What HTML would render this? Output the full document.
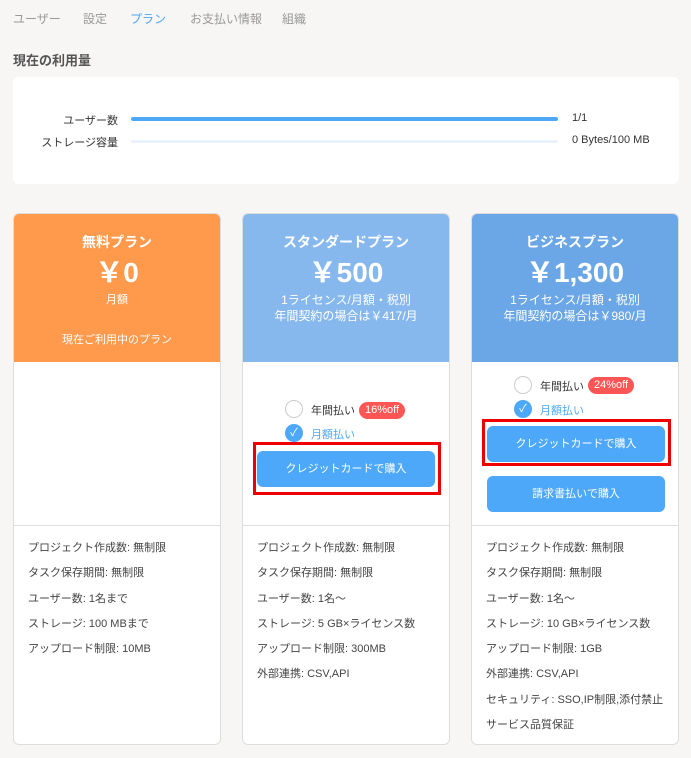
<!DOCTYPE html>
<html><head><meta charset="utf-8"><style>
*{margin:0;padding:0;box-sizing:border-box}
body{width:691px;height:758px;background:#f7f6f5;font-family:"Liberation Sans","Noto Sans CJK JP",sans-serif;position:relative;overflow:hidden;color:#333}
.a{position:absolute}
.tab{top:10px;font-size:12px;color:#999}
.card{position:absolute;top:213px;height:532px;background:#fff;border:1px solid #ddd;border-radius:6px;overflow:hidden}
.hd{height:148px;color:#fff;text-align:center}
.hd .t{padding-top:18px;font-size:14px;font-weight:bold;height:40px}
.hd .p{font-size:28px;font-weight:bold;height:38px;line-height:38px}
.hd .s{font-size:12px;line-height:16px}
.line{position:absolute;left:0;right:0;top:311px;border-top:1px solid #ddd}
.f{position:absolute;left:14px;top:322px;font-size:11px;line-height:25.3px;color:#444}
.btn{position:absolute;background:#4da8fa;color:#fff;border-radius:6px;font-size:11px;text-align:center;height:36px;line-height:36px}
.red{position:absolute;border:3px solid #e00}
.rad{position:absolute;width:18px;height:18px;border-radius:50%;border:1px solid #ccc;background:#fff}
.chk{position:absolute;width:18px;height:18px;border-radius:50%;background:#4da8fa;color:#fff;font-size:11px;text-align:center;line-height:18px}
.lb{position:absolute;font-size:11px}
.off{position:absolute;background:#f55;color:#fff;font-size:11px;border-radius:9px;height:17px;line-height:17px;padding:0 6px}
</style></head><body>
<div class="a tab" style="left:13px">ユーザー</div>
<div class="a tab" style="left:83px">設定</div>
<div class="a tab" style="left:130px;color:#4da8fa">プラン</div>
<div class="a tab" style="left:190px">お支払い情報</div>
<div class="a tab" style="left:282px">組織</div>
<div class="a" style="left:13px;top:50px;font-size:13px;font-weight:bold;color:#555">現在の利用量</div>
<div class="a" style="left:13px;top:77px;width:666px;height:107px;background:#fff;border-radius:6px"></div>
<div class="a" style="left:30px;top:112px;width:88px;text-align:right;font-size:11px">ユーザー数</div>
<div class="a" style="left:131px;top:117px;width:427px;height:4px;border-radius:2px;background:#4da8fa"></div>
<div class="a" style="left:572px;top:112px;font-size:11px">1/1</div>
<div class="a" style="left:30px;top:134px;width:88px;text-align:right;font-size:11px">ストレージ容量</div>
<div class="a" style="left:131px;top:140px;width:427px;height:3px;border-radius:2px;background:#eaf3fd"></div>
<div class="a" style="left:572px;top:134px;font-size:11px">0 Bytes/100 MB</div>

<div class="card" style="left:13px;width:208px">
<div class="hd" style="background:#ff9a4c"><div class="t">無料プラン</div><div class="p">￥0</div><div class="s" style="font-size:11px">月額</div><div class="s" style="margin-top:24px;font-size:11px">現在ご利用中のプラン</div></div>
<div class="line"></div>
<div class="f">プロジェクト作成数: 無制限<br>タスク保存期間: 無制限<br>ユーザー数: 1名まで<br>ストレージ: 100 MBまで<br>アップロード制限: 10MB</div>
</div>

<div class="card" style="left:242px;width:208px">
<div class="hd" style="background:#86b8ee"><div class="t">スタンダードプラン</div><div class="p">￥500</div><div class="s">1ライセンス/月額・税別</div><div class="s">年間契約の場合は￥417/月</div></div>
<div class="rad" style="left:42px;top:186px"></div><div class="lb" style="left:68px;top:188px">年間払い</div><div class="off" style="left:116px;top:188px">16%off</div>
<div class="chk" style="left:42px;top:210px">✓</div><div class="lb" style="left:68px;top:212px;color:#4da8fa">月額払い</div>
<div class="btn" style="left:14px;top:237px;width:178px">クレジットカードで購入</div>
<div class="line"></div>
<div class="f">プロジェクト作成数: 無制限<br>タスク保存期間: 無制限<br>ユーザー数: 1名～<br>ストレージ: 5 GB×ライセンス数<br>アップロード制限: 300MB<br>外部連携: CSV,API</div>
</div>

<div class="card" style="left:471px;width:208px">
<div class="hd" style="background:#6ba7e6"><div class="t">ビジネスプラン</div><div class="p">￥1,300</div><div class="s">1ライセンス/月額・税別</div><div class="s">年間契約の場合は￥980/月</div></div>
<div class="rad" style="left:42px;top:162px"></div><div class="lb" style="left:68px;top:164px">年間払い</div><div class="off" style="left:116px;top:163px">24%off</div>
<div class="chk" style="left:42px;top:186px">✓</div><div class="lb" style="left:68px;top:188px;color:#4da8fa">月額払い</div>
<div class="btn" style="left:15px;top:212px;width:178px">クレジットカードで購入</div>
<div class="btn" style="left:15px;top:262px;width:178px">請求書払いで購入</div>
<div class="line"></div>
<div class="f">プロジェクト作成数: 無制限<br>タスク保存期間: 無制限<br>ユーザー数: 1名～<br>ストレージ: 10 GB×ライセンス数<br>アップロード制限: 1GB<br>外部連携: CSV,API<br>セキュリティ: SSO,IP制限,添付禁止<br>サービス品質保証</div>
</div>

<div class="red" style="left:253px;top:442px;width:188px;height:53px"></div>
<div class="red" style="left:482px;top:419px;width:189px;height:47px"></div>
</body></html>
